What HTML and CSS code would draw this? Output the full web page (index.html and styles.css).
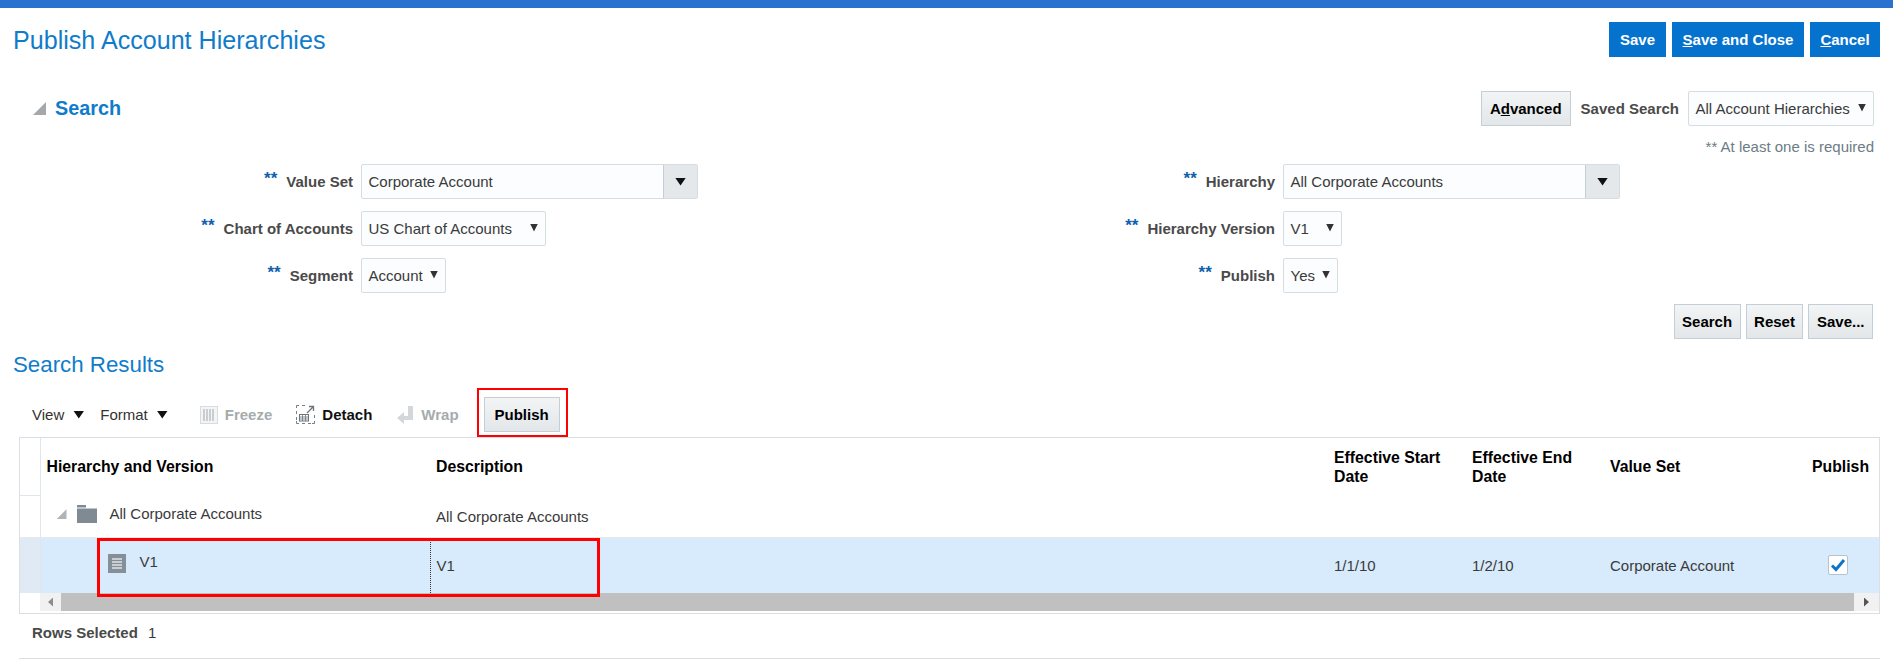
FILE: index.html
```html
<!DOCTYPE html>
<html lang="en">
<head>
<meta charset="utf-8">
<title>Publish Account Hierarchies</title>
<link rel="stylesheet" href="styles.css">
</head>
<body>
<div class="topbar"></div>
<div class="page">
  <header class="page-header">
    <h1 class="page-title">Publish Account Hierarchies</h1>
    <div class="btn-group">
      <button class="btn-primary btn-save">Save</button>
      <button class="btn-primary btn-close"><u>S</u>ave and Close</button>
      <button class="btn-primary btn-cancel"><u>C</u>ancel</button>
    </div>
  </header>

  <section class="search-head">
    <div class="search-title">
      <span class="disclosure"></span>
      <h2>Search</h2>
    </div>
    <div class="search-tools">
      <button class="btn">A<u>d</u>vanced</button>
      <span class="label saved-label">Saved Search</span>
      <div class="select sel-saved"><span>All Account Hierarchies</span><i class="caret"></i></div>
    </div>
  </section>
  <div class="req-note">** At least one is required</div>

  <section class="form">
    <label class="label"><span class="star">**</span>Value Set</label>
    <div class="field"><div class="combo"><span class="combo-text">Corporate Account</span><span class="combo-btn"><i class="caret-lg"></i></span></div></div>
    <label class="label"><span class="star">**</span>Hierarchy</label>
    <div class="field"><div class="combo"><span class="combo-text">All Corporate Accounts</span><span class="combo-btn"><i class="caret-lg"></i></span></div></div>

    <label class="label"><span class="star">**</span>Chart of Accounts</label>
    <div class="field"><div class="select sel-chart"><span>US Chart of Accounts</span><i class="caret"></i></div></div>
    <label class="label"><span class="star">**</span>Hierarchy Version</label>
    <div class="field"><div class="select sel-version"><span>V1</span><i class="caret"></i></div></div>

    <label class="label"><span class="star">**</span>Segment</label>
    <div class="field"><div class="select sel-segment"><span>Account</span><i class="caret"></i></div></div>
    <label class="label"><span class="star">**</span>Publish</label>
    <div class="field"><div class="select sel-publish"><span>Yes</span><i class="caret"></i></div></div>
  </section>

  <div class="search-actions">
    <button class="btn">Search</button>
    <button class="btn">Reset</button>
    <button class="btn">Save...</button>
  </div>

  <h2 class="results-title">Search Results</h2>

  <div class="toolbar">
    <span class="tb-menu">View<i class="caret-lg"></i></span>
    <span class="tb-menu tb-format">Format<i class="caret-lg"></i></span>
    <span class="tb-action tb-disabled tb-freeze">
      <svg width="18" height="18" viewBox="0 0 18 18"><rect x="0.5" y="0.5" width="17" height="17" fill="#f3f4f5" stroke="#d9dcde"/><path d="M4 3v12M7 3v12M10 3v12M13 3v12" stroke="#b9bdc0" stroke-width="1.4"/></svg>
      Freeze
    </span>
    <span class="tb-action tb-detach">
      <svg width="19" height="19" viewBox="0 0 19 19"><path d="M.5 3V.5H3M6 .5h3M.5 6v3M.5 12v3M.5 16v2.500H3M6 18.500h3M12 18.500h3M16 18.500h2.500V16M18.500 13v-3" fill="none" stroke="#777f85"/><path d="M11 8l6-6M13 1.500h4.500V6" fill="none" stroke="#6d757b" stroke-width="1.300"/><rect x="3.500" y="9.500" width="9" height="6.500" fill="#fff" stroke="#6d757b"/><path d="M3.500 12h9M3.500 14h9M6.500 9.500V16M9.500 9.500V16" stroke="#6d757b" stroke-width=".8"/></svg>
      Detach
    </span>
    <span class="tb-action tb-disabled tb-wrap">
      <svg width="16" height="18" viewBox="0 0 16 18"><path d="M11 0h5v14H7v4L0 12l7-6v4h4z" fill="#d4d7d9"/></svg>
      Wrap
    </span>
    <button class="btn tb-publish">Publish</button>
  </div>

  <div class="tree-table">
    <table>
      <colgroup>
        <col class="c-head"><col class="c-hier"><col class="c-desc"><col class="c-start"><col class="c-end"><col class="c-set"><col class="c-pub">
      </colgroup>
      <thead>
        <tr>
          <th class="rowhead"></th>
          <th>Hierarchy and Version</th>
          <th>Description</th>
          <th>Effective Start Date</th>
          <th>Effective End Date</th>
          <th>Value Set</th>
          <th>Publish</th>
        </tr>
      </thead>
      <tbody>
        <tr class="row-parent">
          <td class="rowhead"></td>
          <td>
            <div class="tree-node tree-parent">
              <span class="disclosure disclosure-sm"></span>
              <svg class="folder" width="20" height="18" viewBox="0 0 20 18"><path d="M0 0h9v2.500H0z" fill="#7f8a92"/><path d="M0 3.500h20V18H0z" fill="#7f8a92"/></svg>
              <span>All Corporate Accounts</span>
            </div>
          </td>
          <td class="cell-low">All Corporate Accounts</td>
          <td></td><td></td><td></td><td></td>
        </tr>
        <tr class="row-selected">
          <td class="rowhead"></td>
          <td>
            <div class="tree-node tree-leaf">
              <svg width="18" height="19" viewBox="0 0 18 19"><rect width="18" height="19" fill="#848f97"/><path d="M4 5h10M4 8h10M4 11h10M4 14h10" stroke="#dfe4e8" stroke-width="1.400"/></svg>
              <span>V1</span>
            </div>
          </td>
          <td class="cell-focus">V1</td>
          <td>1/1/10</td>
          <td>1/2/10</td>
          <td>Corporate Account</td>
          <td>
            <span class="check">
              <svg width="16" height="14" viewBox="0 0 16 14"><path d="M2 7.500l4 4L14 2" fill="none" stroke="#0f74c8" stroke-width="3"/></svg>
            </span>
          </td>
        </tr>
      </tbody>
    </table>
    <div class="hscroll">
      <span class="hs-arrow"><i class="tri-left"></i></span>
      <span class="hs-thumb"></span>
      <span class="hs-arrow hs-arrow-r"><i class="tri-right"></i></span>
    </div>
  </div>

  <div class="rows-selected"><span class="label">Rows Selected</span><span class="count">1</span></div>
  <div class="bottom-rule"></div>

  <div class="mark mark-publish"></div>
  <div class="mark mark-row"></div>
</div>
</body>
</html>
```

FILE: styles.css
```css
* { box-sizing: border-box; }
html, body { margin: 0; padding: 0; }
body {
  background: #fff;
  font-family: "Liberation Sans", Arial, sans-serif;
  font-size: 15px;
  color: #3a3a3a;
  overflow: hidden;
  height: 659px;
}
button { font-family: inherit; cursor: default; }

.topbar { height: 8px; background: #2a72cf; }
.page { position: relative; height: 651px; padding-top: 14px; }

/* header */
.page-header {
  display: flex;
  justify-content: space-between;
  align-items: center;
  height: 35px;
  padding: 0 13px;
}
.page-title { margin: 0; font-size: 25.1px; font-weight: 400; color: #0f7ccb; line-height: 36px; }
.btn-group { display: flex; gap: 6px; }
.btn-primary {
  height: 35px;
  border: 0;
  background: #0572ce;
  color: #fff;
  font-size: 15px;
  font-weight: 700;
  padding: 0;
}
.btn-save { width: 57px; }
.btn-close { width: 132px; }
.btn-cancel { width: 70px; }
.btn {
  height: 35px;
  border: 1px solid #c4ced7;
  background: linear-gradient(#f2f4f5, #e3e7e9);
  color: #000;
  font-size: 15px;
  font-weight: 700;
  padding: 0 8px;
}

/* search head */
.search-head {
  display: flex;
  justify-content: space-between;
  align-items: center;
  height: 35px;
  margin-top: 34px;
  padding: 0 19px 0 33px;
}
.search-title { display: flex; align-items: center; gap: 9px; }
.search-title h2 { margin: 0; font-size: 19.800px; font-weight: 700; color: #0f7ccb; line-height: 24px; position: relative; top: -1px; }
.disclosure {
  width: 13px;
  height: 13px;
  background: #a4a8ab;
  clip-path: polygon(100% 0, 100% 100%, 0 100%);
}
.disclosure-sm { width: 10px; height: 10px; background: #b0b4b7; }
.search-tools { display: flex; align-items: center; }
.saved-label { margin: 0 9px 0 10px; }

.label { font-weight: 700; color: #4a4a4a; }
.req-note { height: 38px; padding: 12px 19px 0 0; text-align: right; color: #6c7c86; line-height: 18px; }

/* form */
.form {
  display: grid;
  grid-template-columns: 353px 570px 352px 1fr;
  grid-auto-rows: 35px;
  row-gap: 12px;
}
.form .label { display: flex; justify-content: flex-end; align-items: center; }
.star { color: #0f5fae; font-size: 17px; margin-right: 9px; position: relative; top: -3px; font-weight: 700; line-height: 1; }
.field { padding-left: 8px; display: flex; }

.combo {
  display: flex;
  width: 337px;
  height: 35px;
  border: 1px solid #d6dde2;
  border-radius: 2px;
  background: #fbfdfe;
}
.combo-text { flex: 1; padding-left: 6.500px; line-height: 34px; color: #3a3a3a; }
.combo-btn {
  width: 34px;
  background: #e4e8ea;
  border-left: 1px solid #c4ced7;
  display: flex;
  align-items: center;
  justify-content: center;
}
.select {
  display: flex;
  justify-content: space-between;
  align-items: center;
  height: 35px;
  padding: 0 7px 0 6.500px;
  border: 1px solid #d6dde2;
  border-radius: 2px;
  background: #fbfdfe;
  color: #3a3a3a;
}
.sel-saved { width: 186px; }
.sel-chart { width: 185px; }
.sel-segment { width: 85px; }
.sel-version { width: 59px; }
.sel-publish { width: 55px; }
.caret {
  width: 8px;
  height: 8px;
  margin-top: -2px;
  background: #333;
  clip-path: polygon(0 0, 100% 0, 50% 100%);
}
.caret-lg {
  display: inline-block;
  width: 11px;
  height: 8px;
  background: #111;
  clip-path: polygon(0 0, 100% 0, 50% 100%);
}

.search-actions {
  display: flex;
  justify-content: flex-end;
  gap: 5px;
  margin-top: 11px;
  padding-right: 20px;
}
.search-actions .btn { padding: 0 7.500px; }

/* results */
.results-title { margin: 13px 0 0; padding-left: 13px; font-size: 22.300px; font-weight: 400; color: #0f7ccb; line-height: 26px; height: 26px; }

.toolbar { display: flex; align-items: center; height: 35px; margin-top: 19px; padding-left: 32px; }
.tb-menu { display: flex; align-items: center; gap: 9px; color: #333; }
.tb-format { margin-left: 16px; }
.tb-action { display: flex; align-items: center; gap: 7px; font-weight: 700; color: #111; }
.tb-disabled { color: #a6abae; }
.tb-freeze { margin-left: 32px; }
.tb-detach { margin-left: 24px; }
.tb-wrap { margin-left: 25px; gap: 8px; }
.tb-publish { margin-left: 25px; width: 76px; padding: 0; }

.tree-table {
  margin: 5px 13px 0 19px;
  height: 177px;
  border: 1px solid #d9dfe4;
}
table { border-collapse: collapse; table-layout: fixed; width: 1859px; }
.c-head { width: 20px; }
.c-hier { width: 390px; }
.c-desc { width: 898px; }
.c-start { width: 138px; }
.c-end { width: 138px; }
.c-set { width: 202px; }
.c-pub { width: 73px; }
th, td { padding: 0 6px; text-align: left; vertical-align: middle; }
th { height: 57px; font-size: 15.800px; font-weight: 700; color: #000; line-height: 19px; }
td { color: #3a3a3a; }
.rowhead { padding: 0; border-right: 1px solid #e1e6ea; border-bottom: 1px solid #e1e6ea; }
.row-parent td { height: 42px; border-bottom: 1px solid #e6eaed; }
.row-selected td { height: 56px; background: #d7ebfc; }
.row-selected .rowhead { background: #dfeaf4; border-bottom: 0; }
.cell-low { padding-top: 2px; }
.cell-focus { border-left: 1px dotted #333; }

.tree-node { display: flex; align-items: center; }
.tree-parent { padding-left: 10px; margin-top: -3px; }
.tree-parent .folder { margin-left: 10px; margin-right: 13px; }
.tree-parent span:last-child { position: relative; top: -1px; }
.tree-leaf { padding-left: 61px; gap: 14px; margin-top: -3px; }
.tree-leaf span { position: relative; top: -2px; }
.check {
  display: inline-flex;
  align-items: center;
  justify-content: center;
  margin-left: 16px;
  width: 20px;
  height: 20px;
  background: #fff;
  border: 1px solid #b6c3ce;
  border-radius: 2px;
}

.hscroll { display: flex; height: 18px; margin-left: 20px; margin-top: 0; }
.hs-arrow { width: 21px; background: #f1f1f1; display: flex; align-items: center; justify-content: center; }
.hs-arrow-r { width: 25px; }
.hs-thumb { flex: 1; background: #c0c0c0; }
.tri-left { width: 5px; height: 9px; background: #8d8d8d; clip-path: polygon(100% 0, 100% 100%, 0 50%); }
.tri-right { width: 5px; height: 9px; background: #555; clip-path: polygon(0 0, 100% 50%, 0 100%); }

.rows-selected { display: flex; gap: 10px; margin-top: 10px; padding-left: 32px; line-height: 18px; height: 18px; }
.count { color: #3a3a3a; }
.bottom-rule { margin: 16px 13px 0 19px; border-top: 1px solid #d9dfe4; }

/* red annotations drawn over the screen */
.mark { position: absolute; border-style: solid; border-color: #f00; pointer-events: none; }
.mark-publish { left: 477px; top: 380px; width: 91px; height: 49px; border-width: 2px; }
.mark-row { left: 97px; top: 530px; width: 503px; height: 59px; border-width: 3.500px; }
```
